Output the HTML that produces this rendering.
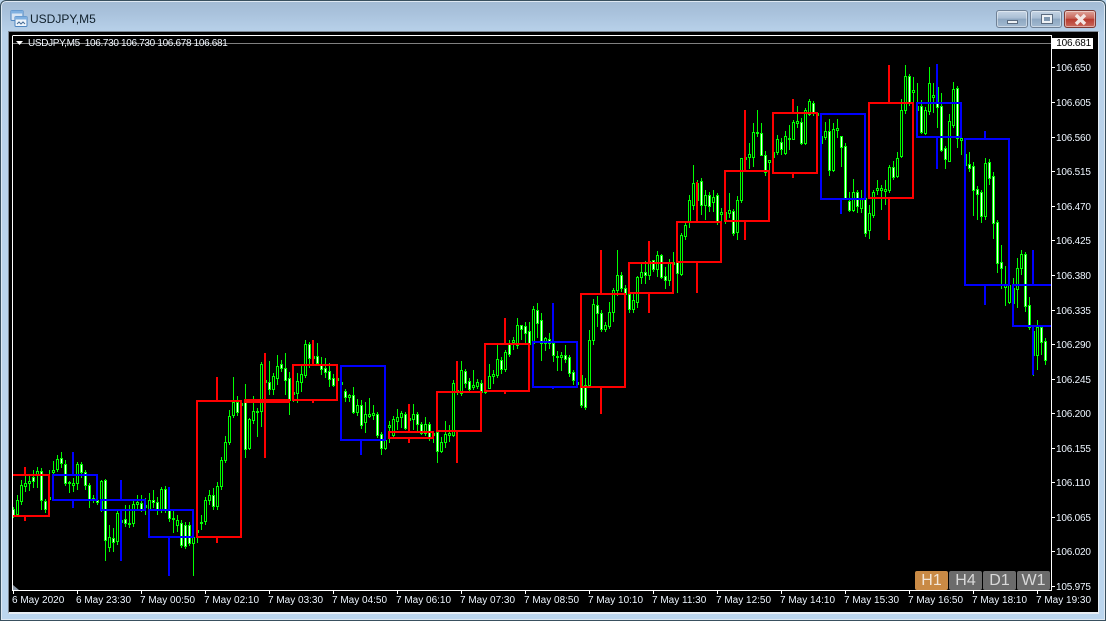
<!DOCTYPE html>
<html><head><meta charset="utf-8"><title>USDJPY,M5</title>
<style>
html,body{margin:0;padding:0;width:1106px;height:621px;overflow:hidden;background:#b9d3ea}
*{box-sizing:border-box}
body{font-family:"Liberation Sans",sans-serif;position:relative}
.win{position:absolute;left:0;top:0;width:1106px;height:621px;border:1px solid #39505f;border-radius:6px 6px 0 0;background:linear-gradient(180deg,#a3bbd4 0,#a9c2dc 12px,#b9d2ea 32px,#bcd6ee 100%);box-shadow:inset 0 0 0 1px #dfe9f3}
.title{position:absolute;left:30px;top:12px;font-size:12px;line-height:14px;color:#10202c}
.btn{position:absolute;top:10px;height:18px;border:1px solid #6f8196;border-radius:3px;background:linear-gradient(180deg,#c6d5e5 0,#a9bed4 45%,#8da7c1 50%,#a3bad1 100%);box-shadow:inset 0 0 0 1px rgba(255,255,255,.45)}
.client{position:absolute;left:8px;top:31px;width:1091px;height:583px;background:#000;border:1px solid #7b8590;border-right-color:#e8eef4;border-bottom:2px solid #e8eef4}
.svg{position:absolute;left:0;top:0}
.p,.t{position:absolute;font-size:10px;line-height:12px;color:#eef6ff;white-space:pre}
.p{left:1056px;letter-spacing:-.2px}
.t{top:595px}
.tf{position:absolute;top:571px;height:19px;border-radius:2px;background:#6b6b6b;color:#d9d9d9;font-size:16px;line-height:19px;text-align:center;font-weight:normal}
</style></head><body>
<div class="win"></div>
<svg class="svg" style="left:10px;top:10px" width="18" height="18" viewBox="0 0 18 18"><rect x="1" y="0.5" width="12" height="10" rx="1" fill="#d8e6f4" stroke="#4f86c0"/><rect x="1" y="0.5" width="12" height="3" fill="#7fb0e0"/><rect x="5" y="6.5" width="12" height="10" rx="1" fill="#eef5fc" stroke="#4f86c0"/><rect x="5" y="6.5" width="12" height="3" fill="#7fb0e0"/><path d="M7 14l2-2 2 2 2-2 2 2" fill="none" stroke="#4a6f98"/></svg>
<div class="title">USDJPY,M5</div>
<div class="btn" style="left:996px;width:32px"><div style="position:absolute;left:10px;top:9px;width:11px;height:4px;background:#eef2f6;border:1px solid #5c6c80"></div></div>
<div class="btn" style="left:1030px;width:32px"><div style="position:absolute;left:10px;top:3px;width:12px;height:10px;background:#eef2f6;border:1px solid #5c6c80"><div style="margin:2px;height:4px;background:#7f97b0"></div></div></div>
<div class="btn" style="left:1064px;width:32px;border-color:#7d3a34;background:linear-gradient(180deg,#dfa49a 0,#c9685c 45%,#b83c2f 52%,#c9685c 100%)"><svg style="position:absolute;left:8px;top:2px" width="15" height="13" viewBox="0 0 15 13"><path d="M3 2l9 9M12 2l-9 9" stroke="#f3e6e3" stroke-width="3.4" fill="none"/></svg></div>
<div class="client"></div>

<svg id="c" class="svg" width="1106" height="621" shape-rendering="crispEdges">
<g id="cd"></g>
<g fill="none" stroke-width="2">
<g stroke="#ff0000">
<path d="M13 475H49V516H13M25 467V475M25 516V521"/>
<path d="M197 401H241V537H197ZM217 377V401M217 537V543"/>
<path d="M245 400H289V402H245ZM265 353V400M265 402V458"/>
<path d="M293 365H337V400H293ZM313 340V365M313 400V403"/>
<path d="M389 432H433V438H389ZM409 404V432M409 438V443"/>
<path d="M437 392H481V431H437ZM457 361V392M457 431V463"/>
<path d="M485 344H529V391H485ZM505 318V344M505 391V394"/>
<path d="M581 294H625V387H581ZM601 250V294M601 387V414"/>
<path d="M629 263H673V293H629ZM649 241V263M649 293V313"/>
<path d="M677 222H721V262H677ZM697 182V222M697 262V293"/>
<path d="M725 171H769V221H725ZM745 110V171M745 221V240"/>
<path d="M773 113H817V173H773ZM793 99V113M793 173V178"/>
<path d="M869 103H913V198H869ZM889 65V103M889 198V240"/>
</g>
<g stroke="#0000ff">
<path d="M53 475H97V500H53ZM73 452V475M73 500V508"/>
<path d="M101 500H145V510H101ZM121 480V500M121 510V561"/>
<path d="M149 510H193V537H149ZM169 487V510M169 537V576"/>
<path d="M341 366H385V440H341ZM361 440V455"/>
<path d="M533 342H577V387H533ZM553 303V342M553 387V389"/>
<path d="M821 114H865V199H821ZM841 199V214"/>
<path d="M917 103H961V137H917ZM937 64V103M937 137V169"/>
<path d="M965 139H1009V285H965ZM985 131V139M985 285V305"/>
<path d="M1051 285H1013V326H1051M1033 250V285M1033 326V375"/>
</g>
</g>
<!-- frame -->
<path d="M12.5 36V590.5H1051.5V35.5H12.5" fill="none" stroke="#fff"/>
<path d="M13 43.5H1051" stroke="#808080"/>
<path d="M16 41h7l-3.5 4z" fill="#fff" shape-rendering="auto"/>
<path d="M13 585l6 5h-6z" fill="#8a97a5" shape-rendering="auto"/>
<path d="M1052 67.5h3M1052 102.5h3M1052 137.5h3M1052 171.5h3M1052 206.5h3M1052 240.5h3M1052 275.5h3M1052 310.5h3M1052 344.5h3M1052 379.5h3M1052 413.5h3M1052 448.5h3M1052 482.5h3M1052 517.5h3M1052 551.5h3M1052 586.5h3" stroke="#fff"/>
<path d="M13.5 591v3M77.5 591v3M141.5 591v3M205.5 591v3M269.5 591v3M333.5 591v3M397.5 591v3M461.5 591v3M525.5 591v3M589.5 591v3M653.5 591v3M717.5 591v3M781.5 591v3M845.5 591v3M909.5 591v3M973.5 591v3M1037.5 591v3" stroke="#fff"/>
</svg>

<div class="p" style="left:28px;top:38px;color:#f2f8ff;letter-spacing:-.33px">USDJPY,M5  106.730 106.730 106.678 106.681</div>
<div style="position:absolute;left:1052px;top:38px;width:41px;height:11px;background:#fff;color:#000;font-size:10px;line-height:11px;text-align:right;padding-right:2px;letter-spacing:-.2px">106.681</div>
<div class="p" style="top:63px">106.650</div>
<div class="p" style="top:98px">106.605</div>
<div class="p" style="top:133px">106.560</div>
<div class="p" style="top:167px">106.515</div>
<div class="p" style="top:202px">106.470</div>
<div class="p" style="top:236px">106.425</div>
<div class="p" style="top:271px">106.380</div>
<div class="p" style="top:306px">106.335</div>
<div class="p" style="top:340px">106.290</div>
<div class="p" style="top:375px">106.245</div>
<div class="p" style="top:409px">106.200</div>
<div class="p" style="top:444px">106.155</div>
<div class="p" style="top:478px">106.110</div>
<div class="p" style="top:513px">106.065</div>
<div class="p" style="top:547px">106.020</div>
<div class="p" style="top:582px">105.975</div>

<div class="t" style="left:12px">6 May 2020</div>
<div class="t" style="left:76px">6 May 23:30</div>
<div class="t" style="left:140px">7 May 00:50</div>
<div class="t" style="left:204px">7 May 02:10</div>
<div class="t" style="left:268px">7 May 03:30</div>
<div class="t" style="left:332px">7 May 04:50</div>
<div class="t" style="left:396px">7 May 06:10</div>
<div class="t" style="left:460px">7 May 07:30</div>
<div class="t" style="left:524px">7 May 08:50</div>
<div class="t" style="left:588px">7 May 10:10</div>
<div class="t" style="left:652px">7 May 11:30</div>
<div class="t" style="left:716px">7 May 12:50</div>
<div class="t" style="left:780px">7 May 14:10</div>
<div class="t" style="left:844px">7 May 15:30</div>
<div class="t" style="left:908px">7 May 16:50</div>
<div class="t" style="left:972px">7 May 18:10</div>
<div class="t" style="left:1036px">7 May 19:30</div>

<div class="tf" style="left:915px;width:33px;background:#c98a45;color:#f2e6d8">H1</div>
<div class="tf" style="left:949px;width:33px">H4</div>
<div class="tf" style="left:983px;width:33px">D1</div>
<div class="tf" style="left:1017px;width:33px">W1</div>

<script>
(function(){
/* top,bottom,wickTop,wickBottom,white — one row per bar, x=13+4i */
var D=[
[509,515,507,518,1],[500,514,495,517,0],[485,501,480,505,0],[483,486,476,492,0],[481,483,475,491,0],[477,481,470,488,1],[471,475,467,488,0],[471,500,468,510,1],[501,509,499,513,1],[497,499,470,505,0],
[470,472,461,475,0],[459,469,455,472,0],[458,463,452,468,1],[464,483,460,486,1],[482,483,481,493,0],[483,485,478,492,0],[464,483,462,490,0],[464,472,462,478,1],[472,485,470,490,1],[485,499,483,508,1],
[498,500,495,503,0],[500,502,497,505,1],[481,509,480,512,0],[480,540,479,561,1],[537,547,525,552,0],[538,542,528,552,1],[513,541,510,545,0],[520,522,510,561,0],[519,523,505,527,1],[523,524,505,528,0],
[504,523,500,527,0],[502,504,495,510,0],[503,509,495,512,1],[505,507,498,515,0],[500,510,493,513,0],[500,502,490,508,1],[502,509,497,515,1],[489,509,487,513,0],[489,509,486,513,1],[509,518,505,522,1],
[518,519,510,533,0],[520,525,515,532,0],[523,545,520,548,1],[525,546,522,549,1],[525,543,522,546,1],[537,543,520,576,0],[530,532,523,543,0],[522,523,515,530,0],[500,521,497,525,0],[495,500,490,505,0],
[495,506,488,510,1],[486,506,482,510,0],[460,486,457,490,0],[442,460,436,463,0],[416,442,410,445,0],[402,415,377,418,0],[402,412,396,416,1],[403,405,400,411,0],[402,449,384,458,1],[419,448,418,450,0],
[411,420,396,424,0],[411,412,408,437,0],[364,411,362,427,0],[380,382,365,395,0],[382,389,361,395,1],[376,389,373,395,0],[366,378,355,385,0],[364,368,360,372,1],[368,380,353,395,1],[378,400,372,415,1],
[392,394,385,402,0],[381,393,373,403,0],[374,382,365,392,0],[344,375,340,378,0],[344,358,342,368,1],[356,358,345,366,0],[356,363,343,363,1],[365,369,357,375,1],[368,372,358,378,1],[371,379,363,387,1],
[378,385,374,387,1],[378,380,365,383,0],[382,384,367,392,0],[391,397,389,402,1],[395,397,394,402,0],[395,412,387,414,1],[405,412,399,416,0],[405,425,400,429,1],[414,422,402,433,0],[414,416,398,418,0],
[413,415,405,420,0],[414,435,412,438,1],[434,448,432,455,1],[440,448,438,450,0],[425,427,421,443,0],[419,435,416,438,0],[417,421,409,430,0],[413,417,411,428,0],[414,428,412,430,1],[418,420,404,428,0],
[414,419,404,430,0],[414,424,412,433,1],[424,433,422,435,1],[424,433,417,436,0],[424,438,422,441,1],[433,435,431,443,0],[432,451,430,463,1],[442,451,437,453,0],[434,442,421,448,0],[433,435,425,442,0],
[383,435,380,437,0],[390,392,384,395,0],[370,393,361,396,0],[371,383,369,388,1],[381,389,378,392,1],[385,387,370,390,0],[382,386,379,389,0],[383,392,380,394,1],[390,392,387,394,0],[376,388,364,389,0],
[374,376,370,384,0],[359,375,345,378,0],[360,369,357,374,1],[352,369,350,372,0],[344,354,340,357,1],[340,342,337,350,0],[325,345,318,349,0],[325,329,325,340,1],[326,333,322,343,1],[331,344,322,345,1],
[309,343,306,346,0],[310,323,303,338,1],[320,343,313,361,1],[338,343,337,351,0],[339,343,333,349,1],[343,355,335,362,1],[356,357,351,371,0],[355,357,352,371,0],[355,359,345,363,1],[357,373,355,377,1],
[372,380,370,385,1],[382,384,380,388,0],[375,405,370,408,1],[385,407,378,410,1],[340,385,330,388,0],[304,340,299,345,0],[305,313,296,327,1],[313,329,310,332,1],[325,329,322,332,0],[312,326,302,329,0],
[290,312,288,322,0],[275,290,250,296,0],[275,288,272,292,1],[288,294,285,298,1],[294,309,292,313,1],[300,309,294,313,0],[277,302,276,308,0],[272,277,264,284,0],[272,275,261,284,1],[261,275,258,280,0],
[260,269,260,272,1],[255,269,251,277,0],[255,277,254,279,1],[276,280,267,289,1],[263,280,259,286,0],[262,264,252,280,0],[262,273,262,293,1],[235,274,233,276,0],[225,236,222,240,0],[200,222,195,228,0],
[183,205,165,210,0],[183,200,180,204,1],[181,205,178,215,1],[195,205,190,220,0],[195,206,192,212,1],[197,202,190,212,0],[195,222,193,225,1],[212,214,208,224,0],[212,219,193,224,0],[210,213,193,218,0],
[211,233,209,236,1],[200,232,196,240,0],[158,200,158,203,0],[157,159,140,167,0],[154,157,143,169,0],[132,157,123,167,0],[132,133,110,137,0],[133,155,123,156,1],[155,172,151,176,1],[160,162,162,177,0],
[152,157,145,172,0],[139,152,135,155,0],[142,149,138,155,1],[136,153,131,155,0],[138,139,125,150,0],[122,139,120,140,0],[121,123,106,128,0],[122,143,118,145,1],[110,143,108,145,0],[101,114,99,116,0],
[103,113,101,116,1],[113,115,115,143,0],[136,143,127,153,0],[131,137,122,140,0],[131,170,119,176,1],[129,170,123,172,0],[128,130,119,138,0],[136,147,136,167,1],[146,198,143,200,1],[201,210,192,212,1],
[192,210,179,212,0],[192,206,190,213,1],[198,208,190,213,0],[198,233,195,237,1],[213,230,205,239,0],[192,215,190,218,0],[188,190,180,195,0],[188,190,185,210,0],[189,191,180,205,0],[167,190,165,193,0],
[167,177,161,180,1],[158,176,152,178,0],[110,156,99,158,0],[76,110,65,114,0],[76,103,74,106,1],[90,92,77,111,0],[106,110,83,122,0],[106,132,100,134,1],[110,133,107,135,0],[83,111,67,115,0],
[95,97,83,113,0],[87,107,76,128,1],[106,150,93,152,1],[148,159,146,169,1],[121,161,114,162,0],[89,125,82,128,0],[88,138,86,148,1],[138,140,131,155,0],[154,165,147,174,1],[164,168,152,172,1],
[166,190,162,216,1],[189,194,186,220,1],[192,216,190,223,1],[163,216,158,220,0],[162,178,159,185,1],[176,223,172,239,1],[222,263,220,273,1],[262,268,245,289,1],[285,287,266,306,0],[285,302,284,304,0],
[288,303,278,307,0],[268,289,258,308,0],[254,268,250,275,0],[254,306,252,312,1],[305,327,297,330,1],[331,355,328,376,0],[327,355,320,370,0],[327,342,325,355,1],[341,360,338,365,1]
];
var g='',w='';
for(var i=0;i<D.length;i++){
 var x=13+4*i,d=D[i],t=d[0],b=d[1];
 g+='M'+(x+.5)+' '+d[2]+'V'+d[3];
 w+='<rect x="'+(x-1)+'" y="'+t+'" width="3" height="'+(b-t+1)+'" fill="#0f0"/>';
 if(b-t>1)w+='<rect x="'+x+'" y="'+(t+1)+'" width="1" height="'+(b-t-1)+'" fill="'+(d[4]?'#f0fff0':'#000')+'"/>';
}
document.getElementById('cd').innerHTML='<path d="'+g+'" stroke="#0f0" fill="none"/>'+w;
})();
</script>
</body></html>
